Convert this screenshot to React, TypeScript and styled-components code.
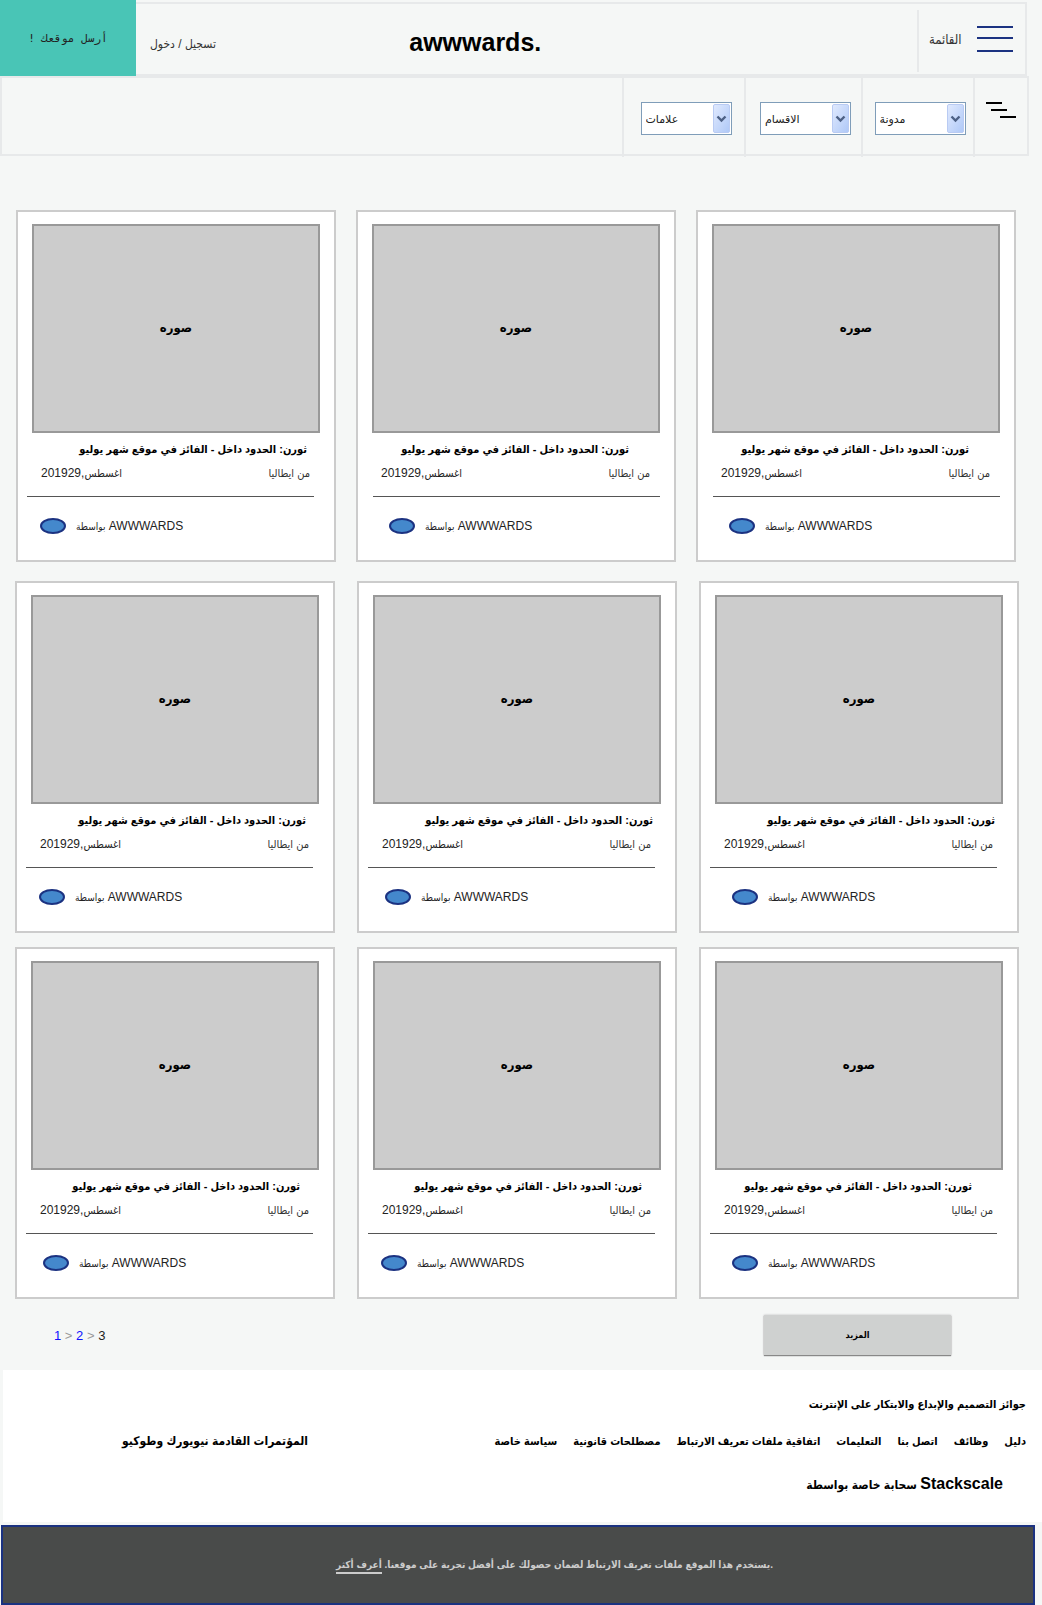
import React from "react";
import styled, { createGlobalStyle } from "styled-components";

const sans = `"Liberation Sans", "DejaVu Sans Condensed", "DejaVu Sans", sans-serif`;

const GlobalStyle = createGlobalStyle`
  *, *::before, *::after { box-sizing: border-box; }
  body {
    margin: 0;
    background: #f5f7f6;
    color: #000;
    font-family: ${sans};
    font-size: 12px;
  }
  a { color: inherit; text-decoration: none; }
  h1, h2, p { margin: 0; }
`;

const Header = styled.header`
  display: grid;
  grid-template-columns: 136px 8fr auto 11fr 110px;
  height: 76px;
  margin-right: 15px;
`;

const SubmitButton = styled.button`
  border: 0;
  padding: 0;
  background: #49c5b6;
  color: #222;
  font: 11px "DejaVu Sans Mono", monospace;
`;

const HeaderCell = styled.div`
  display: flex;
  align-items: center;
  margin-top: 2px;
  border: solid #e7e9ea;
  border-width: 2px 0;
`;

const Login = styled.a`
  margin-left: 14px;
  padding-top: 10px;
  font-size: 12px;
  color: #333;
`;

const Logo = styled.h1`
  padding-top: 6px;
  font-size: 25px;
  line-height: 28px;
`;

const MenuCell = styled(HeaderCell)`
  padding-top: 4px;
  border-right-width: 2px;
`;

const MenuButton = styled.button`
  display: flex;
  flex: 1;
  align-items: center;
  justify-content: space-between;
  height: 62px;
  padding: 0 12px 4px 10px;
  border: 0;
  border-left: 2px solid #e7e9ea;
  background: none;
  font-family: ${sans};
  font-size: 13px;
  color: #333;
`;

const Filters = styled.nav`
  display: grid;
  grid-template-columns: 1fr 122px 117px 112px 54px;
  height: 80px;
  margin-right: 13px;
  border: 2px solid #e7e9ea;
`;

const FilterCell = styled.div`
  display: flex;
  align-items: center;
  justify-content: center;
  height: 79px;
  padding-top: 2px;
  border-left: 2px solid #e7e9ea;
`;

const SelectBox = styled.label`
  position: relative;
  display: block;
  width: 91px;
  height: 33px;
  margin-left: 4px;
`;

const Select = styled.select`
  width: 100%;
  height: 100%;
  padding: 2px 20px 0 4px;
  appearance: none;
  border: 1px solid #7f9db9;
  border-radius: 0;
  background: #fff;
  color: #222;
  font-family: "DejaVu Sans", sans-serif;
  font-size: 11px;
`;

const SelectArrow = styled.svg`
  position: absolute;
  top: 2px;
  right: 2px;
  pointer-events: none;
`;

const SortButton = styled.button`
  padding: 0 0 6px;
  border: 0;
  background: none;
`;

const Gallery = styled.main`
  display: flex;
  flex-direction: column;
  gap: 14px;
  padding-top: 54px;
`;

const CardRow = styled.div<{ $first?: boolean }>`
  display: grid;
  grid-template-columns: repeat(3, 1fr);
  gap: ${(p) => (p.$first ? 20 : 22)}px;
  padding: ${(p) => (p.$first ? "0 26px 5px 16px" : "0 23px 0 15px")};
`;

const Card = styled.article`
  height: 352px;
  padding-top: 12px;
  border: 2px solid #ccc;
  background: #fff;
`;

const Photo = styled.div`
  display: flex;
  align-items: center;
  justify-content: center;
  height: 209px;
  margin: 0 14px;
  padding-bottom: 2px;
  border: 2px solid #999;
  background: #ccc;
  font-size: 13px;
  font-weight: bold;
`;

const CardTitle = styled.h2<{ $inset: number }>`
  height: 30px;
  padding: 8px ${(p) => p.$inset}px 0 0;
  font-size: 11px;
  line-height: 16px;
  white-space: nowrap;
`;

const Meta = styled.div`
  display: flex;
  align-items: center;
  justify-content: space-between;
  height: 20px;
  padding: 0 24px 0 23px;
  color: #333;
`;

const Place = styled.span`
  font-size: 11px;
`;

const DateText = styled.time`
  font-size: 12px;
  color: #222;
`;

const Month = styled.span`
  font-size: 11px;
`;

const Small = styled.span`
  font-size: 10px;
`;

const Rule = styled.hr<{ $start: number }>`
  width: 287px;
  margin: 13px 0 0 ${(p) => p.$start}px;
  border: 0;
  border-top: 1px solid #555;
`;

const Author = styled.div<{ $start: number }>`
  display: flex;
  align-items: center;
  gap: 10px;
  height: 20px;
  margin-top: 19px;
  padding-left: ${(p) => p.$start}px;
  color: #222;
`;

const Avatar = styled.span`
  width: 26px;
  height: 16px;
  border: 2px solid #1b3281;
  border-radius: 50%;
  background: #4488cc;
`;

const Actions = styled.div`
  display: flex;
  align-items: flex-start;
  justify-content: space-between;
  height: 71px;
  padding: 16px 91px 0 54px;
`;

const Pages = styled.nav`
  padding-top: 12px;
  font-size: 13px;
  line-height: 18px;
  color: #999;
`;

const PageLink = styled.a`
  color: #11f;
`;

const CurrentPage = styled.span`
  color: #222;
`;

const MoreButton = styled.button`
  width: 187px;
  height: 40px;
  border: 0;
  background: #cfd1d0;
  box-shadow: 0 1px 1px #888, 0 0 2px #bbb;
  font-family: ${sans};
  font-size: 9px;
  font-weight: bold;
`;

const Footer = styled.footer`
  display: flex;
  flex-direction: column;
  height: 152px;
  margin-left: 3px;
  padding: 24px 16px 0 119px;
  background: #fff;
  font-size: 12px;
  font-weight: bold;
`;

const Tagline = styled.p`
  font-size: 11px;
  line-height: 20px;
`;

const FooterLinks = styled.div`
  display: flex;
  justify-content: space-between;
  padding-top: 17px;
  line-height: 20px;
  white-space: nowrap;
`;

const LinkList = styled.nav`
  display: flex;
  gap: 16px;
  font-size: 11px;
`;

const Hosting = styled.p`
  padding: 22px 23px 0 0;
  line-height: 22px;
`;

const Brand = styled.bdi`
  font-size: 16px;
`;

const CookieBar = styled.aside`
  display: flex;
  align-items: center;
  justify-content: center;
  height: 80px;
  margin: 3px 7px 0 1px;
  padding: 0 0 2px 73px;
  border: 2px solid #1b3281;
  background: #494b4a;
  color: #ccc;
  font-size: 10px;
  font-weight: bold;
`;

const LearnMore = styled.a`
  padding-bottom: 2px;
  border-bottom: 2px solid #ccc;
`;

type CardData = { title: number; rule: number; author: number };

const rows: CardData[][] = [
  [
    { title: 27, rule: 9, author: 22 },
    { title: 45, rule: 15, author: 31 },
    { title: 45, rule: 15, author: 31 },
  ],
  [
    { title: 27, rule: 9, author: 22 },
    { title: 22, rule: 9, author: 26 },
    { title: 22, rule: 9, author: 31 },
  ],
  [
    { title: 33, rule: 9, author: 26 },
    { title: 33, rule: 9, author: 22 },
    { title: 45, rule: 9, author: 31 },
  ],
];

const filters = [
  { name: "tags", label: "علامات" },
  { name: "sections", label: "الاقسام" },
  { name: "blog", label: "مدونة" },
];

const footerLinks = [
  "دليل",
  "وظائف",
  "اتصل بنا",
  "التعليمات",
  "اتفاقية ملفات تعريف الارتباط",
  "مصطلحات قانونية",
  "سياسة خاصة",
];

function FilterSelect({ name, label }: { name: string; label: string }) {
  return (
    <SelectBox>
      <Select name={name} aria-label={label}>
        <option>{label}</option>
      </Select>
      <SelectArrow width="17" height="29" viewBox="0 0 17 29" aria-hidden="true">
        <defs>
          <linearGradient id={`arrow-${name}`} x1="0" y1="0" x2="1" y2="1">
            <stop offset="0" stopColor="#e1eafe" />
            <stop offset="1" stopColor="#aec8f7" />
          </linearGradient>
        </defs>
        <rect x="0.5" y="0.5" width="16" height="28" rx="1.5" fill={`url(#arrow-${name})`} stroke="#b9cbf3" />
        <path d="M4.5 12.5l4 4 4-4" fill="none" stroke="#4d6185" strokeWidth="2.4" />
      </SelectArrow>
    </SelectBox>
  );
}

function SiteCard({ title, rule, author }: CardData) {
  return (
    <Card>
      <Photo>صوره</Photo>
      <CardTitle dir="rtl" $inset={title}>
        ثورن: الحدود داخل - الفائز في موقع شهر يوليو
      </CardTitle>
      <Meta>
        <DateText>
          201929,<Month>اغسطس</Month>
        </DateText>
        <Place>من ايطاليا</Place>
      </Meta>
      <Rule $start={rule} />
      <Author $start={author}>
        <Avatar />
        <span>
          <Small>بواسطة</Small> AWWWARDS
        </span>
      </Author>
    </Card>
  );
}

export default function App() {
  return (
    <>
      <GlobalStyle />
      <Header>
        <SubmitButton dir="rtl">أرسل موقعك !</SubmitButton>
        <HeaderCell>
          <Login href="#login" dir="rtl">تسجيل / دخول</Login>
        </HeaderCell>
        <HeaderCell>
          <Logo>awwwards.</Logo>
        </HeaderCell>
        <HeaderCell />
        <MenuCell>
          <MenuButton>
            القائمة
            <svg width="36" height="26" viewBox="0 0 36 26" fill="#1b3281" aria-hidden="true">
              <rect width="36" height="2" />
              <rect y="11" width="36" height="2" />
              <rect y="24" width="36" height="2" />
            </svg>
          </MenuButton>
        </MenuCell>
      </Header>
      <Filters>
        <span />
        {filters.map((f) => (
          <FilterCell key={f.name}>
            <FilterSelect {...f} />
          </FilterCell>
        ))}
        <FilterCell>
          <SortButton aria-label="ترتيب">
            <svg width="30" height="30" viewBox="0 0 30 30" aria-hidden="true">
              <rect y="3" width="16" height="2" />
              <rect x="5" y="10" width="16" height="2" />
              <rect x="14" y="17" width="16" height="2" />
            </svg>
          </SortButton>
        </FilterCell>
      </Filters>
      <Gallery>
        {rows.map((row, r) => (
          <CardRow key={r} $first={r === 0}>
            {row.map((card, c) => (
              <SiteCard key={c} {...card} />
            ))}
          </CardRow>
        ))}
      </Gallery>
      <Actions>
        <Pages aria-label="الصفحات">
          <PageLink href="#1">1</PageLink> &gt; <PageLink href="#2">2</PageLink> &gt;{" "}
          <CurrentPage>3</CurrentPage>
        </Pages>
        <MoreButton>المزيد</MoreButton>
      </Actions>
      <Footer dir="rtl">
        <Tagline>جوائز التصميم والإبداع والابتكار على الإنترنت</Tagline>
        <FooterLinks>
          <LinkList>
            {footerLinks.map((text) => (
              <a key={text} href="#footer">{text}</a>
            ))}
          </LinkList>
          <a href="#conferences">المؤتمرات القادمة نيويورك وطوكيو</a>
        </FooterLinks>
        <Hosting>
          <Brand>Stackscale</Brand> سحابة خاصة بواسطة
        </Hosting>
      </Footer>
      <CookieBar dir="rtl">
        <p>
          .يستخدم هذا الموقع ملفات تعريف الارتباط لضمان حصولك على أفضل تجربة على موقعنا.{" "}
          <LearnMore href="#cookies">أعرف أكثر</LearnMore>
        </p>
      </CookieBar>
    </>
  );
}
